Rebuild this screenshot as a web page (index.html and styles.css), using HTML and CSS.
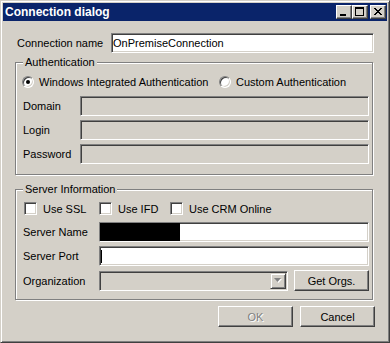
FILE: index.html
```html
<!DOCTYPE html>
<html lang="en">
<head>
    <meta charset="UTF-8">
    <title>Connection dialog</title>
    <link rel="stylesheet" href="styles.css">
</head>
<body>
    <div class="window">
        <div class="titlebar">
            <span class="title">Connection dialog</span>
            <div class="caption-buttons">
                <span class="cap-btn">
                    <svg width="14" height="12" viewBox="0 0 14 12"><path d="M3 8h6v2h-6z" fill="#000"/></svg>
                </span>
                <span class="cap-btn">
                    <svg width="14" height="12" viewBox="0 0 14 12"><path d="M2 1h9v9h-9z M3 3v6h7v-6z" fill="#000" fill-rule="evenodd"/></svg>
                </span>
                <span class="cap-btn cap-close">
                    <svg width="14" height="12" viewBox="0 0 14 12"><path d="M3 2h2v1h-2z M9 2h2v1h-2z M4 3h2v1h-2z M8 3h2v1h-2z M5 4h4v1h-4z M6 5h2v1h-2z M5 6h4v1h-4z M4 7h2v1h-2z M8 7h2v1h-2z M3 8h2v1h-2z M9 8h2v1h-2z" fill="#000"/></svg>
                </span>
            </div>
        </div>

        <div class="dialog-body">
            <div class="name-row">
                <label class="name-label">Connection name</label>
                <div class="textbox name-box">OnPremiseConnection</div>
            </div>

            <fieldset class="group auth-group">
                <legend>Authentication</legend>
                <div class="radio-row">
                    <label class="radio radio-windows"><span class="radio-dot checked"></span>Windows Integrated Authentication</label>
                    <label class="radio"><span class="radio-dot"></span>Custom Authentication</label>
                </div>
                <div class="field-row first">
                    <label class="auth-label">Domain</label>
                    <div class="textbox disabled auth-box"></div>
                </div>
                <div class="field-row">
                    <label class="auth-label">Login</label>
                    <div class="textbox disabled auth-box"></div>
                </div>
                <div class="field-row">
                    <label class="auth-label">Password</label>
                    <div class="textbox disabled auth-box"></div>
                </div>
            </fieldset>

            <fieldset class="group server-group">
                <legend>Server Information</legend>
                <div class="check-row">
                    <label class="check check-ssl"><span class="check-box"></span>Use SSL</label>
                    <label class="check check-ifd"><span class="check-box"></span>Use IFD</label>
                    <label class="check"><span class="check-box"></span>Use CRM Online</label>
                </div>
                <div class="field-row first">
                    <label class="server-label">Server Name</label>
                    <div class="textbox server-box"><span class="redacted"></span></div>
                </div>
                <div class="field-row">
                    <label class="server-label">Server Port</label>
                    <div class="textbox server-box"><span class="caret"></span></div>
                </div>
                <div class="field-row org-row">
                    <label class="server-label">Organization</label>
                    <div class="textbox disabled combo">
                        <span class="combo-btn">
                            <svg width="8" height="5" viewBox="0 0 8 5"><path d="M1 1h7l-3.5 4z" fill="#fff"/><path d="M0 0h7l-3.5 4z" fill="#808080"/></svg>
                        </span>
                    </div>
                    <button class="button get-orgs">Get Orgs.</button>
                </div>
            </fieldset>

            <div class="footer">
                <button class="button" disabled>OK</button>
                <button class="button">Cancel</button>
            </div>
        </div>
    </div>
</body>
</html>
```

FILE: styles.css
```css
* {
    box-sizing: border-box;
}
body {
    margin: 0;
    font-family: "Liberation Sans", Arial, sans-serif;
    font-size: 11px;
    color: #000;
    background: #d4d0c8;
}
.window {
    width: 390px;
    height: 343px;
    padding: 2px;
    background: #d4d0c8;
    border: 1px solid;
    border-color: #d4d0c8 #404040 #404040 #d4d0c8;
    box-shadow: inset 1px 1px #fff, inset -1px -1px #808080;
}

/* title bar */
.titlebar {
    height: 18px;
    display: flex;
    align-items: center;
    justify-content: space-between;
    padding: 0 1px 0 2px;
    background: #0a246a;
}
.title {
    color: #fff;
    font-weight: bold;
    font-size: 12px;
}
.caption-buttons {
    display: flex;
}
.cap-btn {
    width: 16px;
    height: 14px;
    display: flex;
    background: #d4d0c8;
    border: 1px solid;
    border-color: #fff #404040 #404040 #fff;
    box-shadow: inset -1px -1px #808080;
}
.cap-close {
    margin-left: 2px;
}

/* content */
.dialog-body {
    padding: 12px 14px 0 12px;
}
.name-row {
    display: flex;
    align-items: center;
    height: 20px;
    padding-left: 2px;
}
.name-label {
    width: 94px;
    flex-shrink: 0;
}
.name-box {
    width: 263px;
    flex-shrink: 0;
}
.textbox {
    height: 20px;
    display: flex;
    align-items: center;
    padding: 0 1px;
    background: #fff;
    border: 1px solid;
    border-color: #808080 #fff #fff #808080;
    box-shadow: inset 1px 1px #404040, inset -1px -1px #d4d0c8;
}
.textbox.disabled {
    background: #d4d0c8;
}

/* group boxes */
.group {
    margin: 0;
    min-width: 0;
    padding: 0 3px 0 7px;
    border: 1px solid #808080;
    box-shadow: inset 1px 1px #fff, 1px 1px #fff;
}
.group legend {
    padding: 0 2px;
    line-height: 13px;
    background: #d4d0c8;
}
.auth-group {
    margin-top: 3px;
    padding-bottom: 10px;
}
.server-group {
    margin-top: 8px;
    padding-bottom: 8px;
}
.radio-row {
    display: flex;
    align-items: center;
    height: 14px;
    margin-top: 6px;
    margin-left: -1px;
}
.radio {
    display: flex;
    align-items: center;
}
.radio-windows {
    width: 197px;
}
.radio-dot {
    width: 12px;
    height: 12px;
    margin-right: 5px;
    border-radius: 50%;
    background: #fff;
    border: 1px solid;
    border-color: #808080 #fff #fff #808080;
    box-shadow: inset 1px 1px #404040, inset -1px -1px #d4d0c8;
    display: flex;
    align-items: center;
    justify-content: center;
}
.radio-dot.checked::after {
    content: "";
    width: 4px;
    height: 4px;
    border-radius: 50%;
    background: #000;
}
.field-row {
    display: flex;
    align-items: center;
    margin-top: 4px;
}
.field-row.first {
    margin-top: 7px;
}
.auth-label {
    width: 57px;
}
.auth-box {
    width: 289px;
}
.server-label {
    width: 76px;
}
.server-box {
    width: 270px;
}
.check-row {
    display: flex;
    align-items: center;
    height: 13px;
    margin-top: 6px;
    margin-left: 1px;
}
.check {
    display: flex;
    align-items: center;
}
.check-ssl {
    width: 75px;
}
.check-ifd {
    width: 71px;
}
.check-box {
    width: 13px;
    height: 13px;
    margin-right: 6px;
    background: #fff;
    border: 1px solid;
    border-color: #808080 #fff #fff #808080;
    box-shadow: inset 1px 1px #404040, inset -1px -1px #d4d0c8;
}
.redacted {
    width: 80px;
    height: 18px;
    margin-left: -1px;
    background: #000;
}
.caret {
    width: 1px;
    height: 13px;
    background: #000;
}
.org-row {
    height: 21px;
}
.combo {
    width: 189px;
    justify-content: flex-end;
}
.combo-btn {
    width: 16px;
    height: 16px;
    display: flex;
    align-items: center;
    justify-content: center;
    background: #d4d0c8;
    border: 1px solid;
    border-color: #d4d0c8 #404040 #404040 #d4d0c8;
    box-shadow: inset 1px 1px #fff, inset -1px -1px #808080;
}

/* push buttons */
.button {
    width: 75px;
    height: 21px;
    padding: 0;
    font-family: inherit;
    font-size: 11px;
    color: #000;
    background: #d4d0c8;
    border: 1px solid;
    border-color: #fff #404040 #404040 #fff;
    box-shadow: inset -1px -1px #808080;
    border-radius: 0;
}
.button:disabled {
    color: #808080;
    text-shadow: 1px 1px #fff;
}
.get-orgs {
    margin-left: 6px;
}
.footer {
    display: flex;
    justify-content: flex-end;
    gap: 7px;
    margin-top: 6px;
    margin-right: -2px;
}
```
